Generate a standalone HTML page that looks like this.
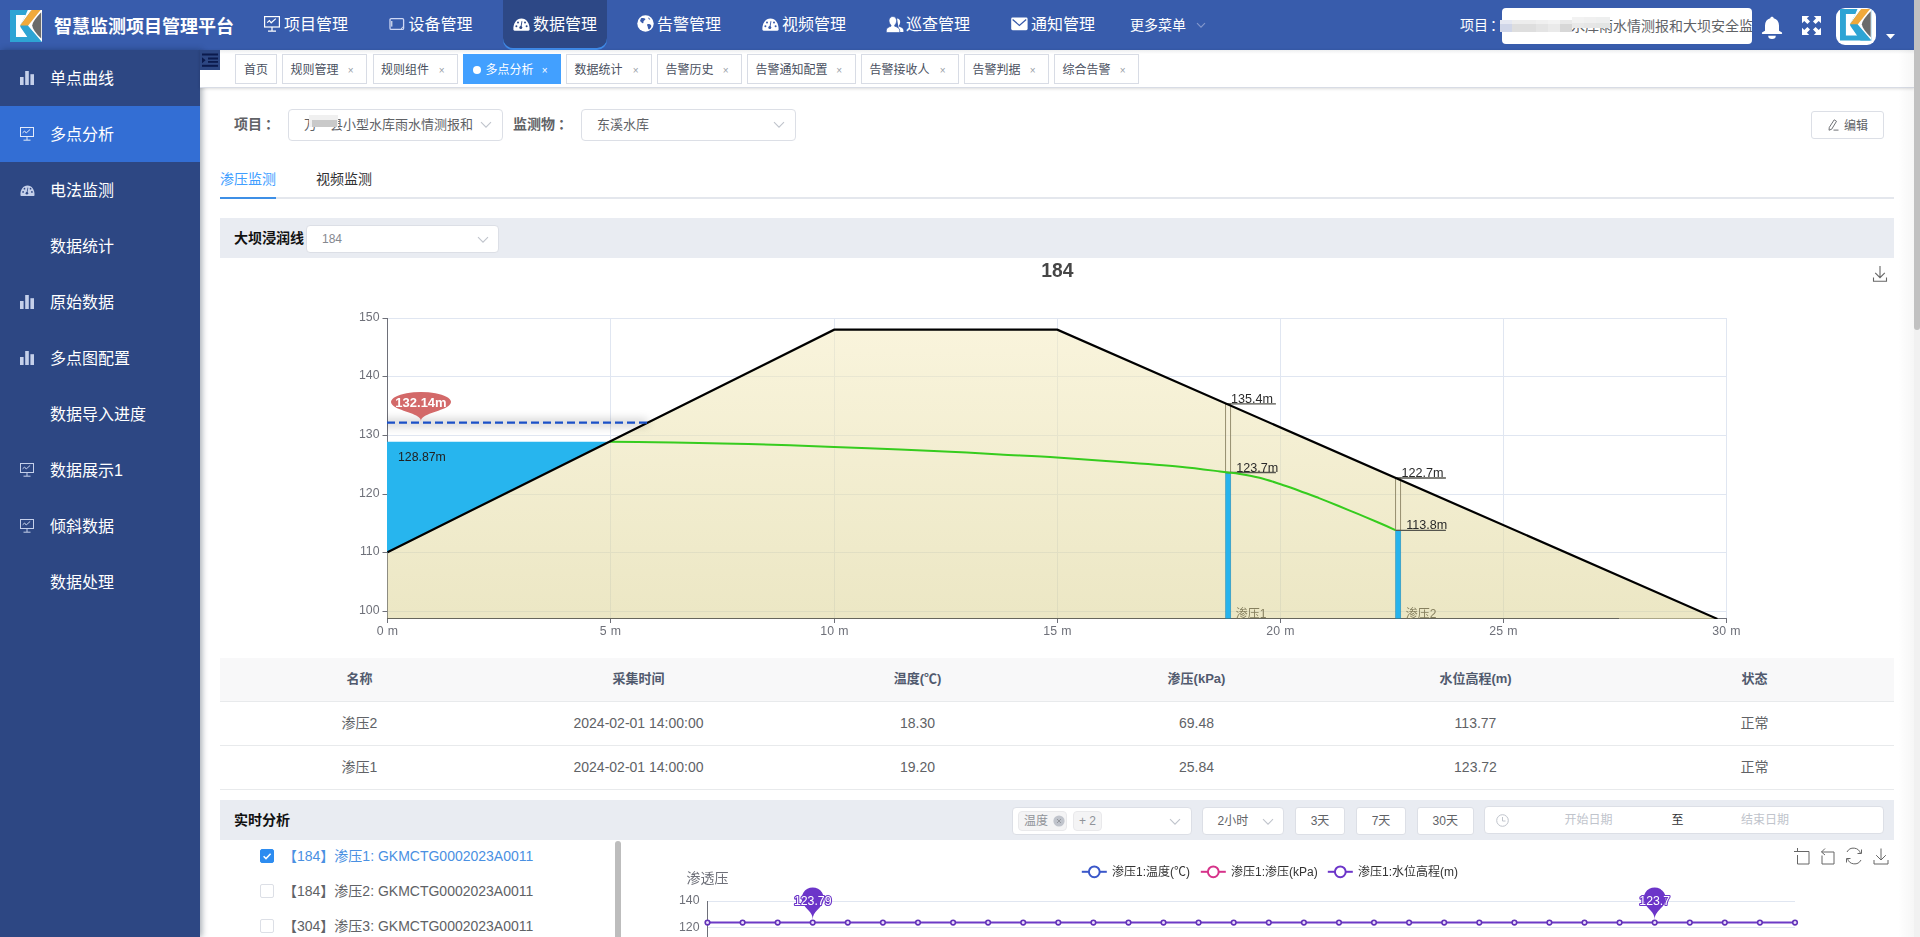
<!DOCTYPE html>
<html lang="zh-CN">
<head>
<meta charset="utf-8">
<title>智慧监测项目管理平台</title>
<style>
*{box-sizing:border-box;margin:0;padding:0}
html,body{width:1920px;height:937px;overflow:hidden;background:#fff}
body{font-family:"Liberation Sans","Noto Sans CJK SC",sans-serif;font-size:14px;color:#606266;position:relative}
.abs{position:absolute}
svg{display:block;overflow:visible}
/* header */
#hdr{position:absolute;left:0;top:0;width:1914px;height:50px;background:#385cac}
#logo{position:absolute;left:10px;top:10px;width:32px;height:32px}
#title{position:absolute;left:54px;top:1px;height:50px;line-height:52px;font-size:18px;font-weight:bold;color:#fff;white-space:nowrap}
.nav{position:absolute;top:0;height:48px;width:104px;color:#fff;font-size:16px;line-height:48px;white-space:nowrap}
.nav.on{background:#2d4886;border-radius:0 0 10px 10px;box-shadow:0 2px 0 0 #3f8ae8}
.nav svg{position:absolute;left:10px;top:16px}
.nav span{position:absolute;left:30px;top:1px}
#more{position:absolute;left:1130px;top:0;height:50px;line-height:50.5px;font-size:14px;color:#fff}
#pjl{position:absolute;left:1460px;top:0;line-height:50px;font-size:14px;color:#fff;white-space:nowrap}
#pjbox{position:absolute;left:1502px;top:8px;width:250px;height:36px;background:#fff;border-radius:4px;overflow:hidden;white-space:nowrap;font-size:14px;line-height:36px;color:#606266}
/* sidebar */
#side{position:absolute;left:0;top:50px;width:200px;height:887px;background:#2d4783;box-shadow:2px 0 6px rgba(0,21,41,.35)}
.mi{position:absolute;left:0;width:200px;height:56px;line-height:56px;color:#fff;font-size:16px}
.mi.on{background:#336ed4}
.mi span{position:absolute;left:50px;top:1px;white-space:nowrap}
.mi svg{position:absolute;left:20px;top:21px}
/* tags */
#tags{position:absolute;left:200px;top:50px;width:1714px;height:38px;background:#fff;border-bottom:1px solid #d8dce5;box-shadow:0 1px 3px 0 rgba(0,0,0,.12),0 0 3px 0 rgba(0,0,0,.04)}
.tag{position:absolute;top:4px;height:30px;border:1px solid #d8dce5;background:#fff;color:#495060;font-size:12px;line-height:28px;white-space:nowrap}
.tag span{position:absolute;left:7.5px;top:1px}
.tag i{position:absolute;right:12.5px;top:1.5px;font-style:normal;font-size:10px;color:#9a9fa8}
.tag.on{background:#42a0ff;border-color:#42a0ff;color:#fff}
.tag.on i{color:#fff}
.tag em{position:absolute;left:9px;top:11px;width:8px;height:8px;border-radius:50%;background:#fff}
/* form */
.lbl u{text-decoration:none;margin-left:3px}
.lbl{position:absolute;font-weight:bold;color:#606266;font-size:14px;white-space:nowrap}
.sel{position:absolute;border:1px solid #dcdfe6;border-radius:4px;background:#fff;color:#606266;white-space:nowrap;overflow:hidden}
.bar{position:absolute;left:220px;width:1674px;height:40px;background:#e9ecf2}
.bar b{position:absolute;left:14px;top:0;line-height:40px;color:#111;font-size:14px}
.btn{position:absolute;border:1px solid #dcdfe6;border-radius:3px;background:#fff;color:#606266;font-size:12px;text-align:center;white-space:nowrap}
/* table */
#tbl{position:absolute;left:220px;top:658px;width:1674px}
#tbl .r{display:flex;height:44px;border-bottom:1px solid #e8eaec;line-height:43px;text-align:center;font-size:14px;color:#606266}
#tbl .r.h{background:#f8f8f9;font-weight:bold;font-size:13px;color:#515a6e;line-height:42px}
#tbl .r div{flex:1}
.tr{position:absolute;left:287px;font-size:14px;color:#606266;white-space:nowrap;line-height:20px}
.cb{position:absolute;left:260px;width:14px;height:14px;border:1px solid #dcdfe6;border-radius:2px;background:#fff}
</style>
</head>
<body>
<div id="hdr">
  <svg id="logo" viewBox="0 0 32 32" width="32" height="32">
    <rect x="0" y="0" width="32" height="32" fill="#2ea4d4"/>
    <polygon points="6,5 15.8,5 10,15.7 17.8,27 6,27" fill="#fff"/>
    <polygon points="21,0 32,0 32,32 18,15.7" fill="#fff"/>
    <polygon points="15.6,5 17.8,0 21.6,0 10.4,15.4 9.9,15.7" fill="#fff"/><polygon points="21.6,0 30.6,0 18.2,15.4 10.1,15.4" fill="#f0a93b"/>
    <polygon points="10.1,16.4 18.2,16.4 30.6,31.4 30.6,32 20.8,32" fill="#2ea4d4"/>
    <path d="M31.2,2.2 L31.2,28.6 Q22.6,20 22.2,15.4 Q22.6,11 31.2,2.2 Z" fill="#6b6b6b"/>
  </svg>
  <div id="title">智慧监测项目管理平台</div>

  <div class="nav" style="left:254px">
    <svg width="16" height="16" viewBox="0 0 16 16" fill="none" stroke="#fff" stroke-width="1.2"><rect x=".6" y=".6" width="14.8" height="10.4"/><path d="M8 11v4M4 15.2h8M3.2 6.6l2.2-2 1.8 2.2 4.6-4.2" /></svg>
    <span>项目管理</span></div>
  <div class="nav" style="left:378.5px">
    <svg width="16" height="16" viewBox="0 0 16 16" fill="none" stroke="#cfd8f5" stroke-width="1.3"><rect x="1" y="2.6" width="13.6" height="10.8" rx="1.2"/><path d="M2.8 5v5.6" stroke="#fff" stroke-width="1"/><path d="M12.2 12.6l1.6-1.6" stroke="#fff" stroke-width="1"/></svg>
    <span>设备管理</span></div>
  <div class="nav on" style="left:503px">
    <svg width="17" height="16" viewBox="0 0 17 16"><path d="M.4 13.6C.1 7.4 3.6 2.6 8.5 2.6s8.4 4.8 8.1 11c0 .7-.5 1.2-1.2 1.2H1.6c-.7 0-1.2-.5-1.2-1.2z" fill="#fff"/><g fill="#2d4886"><circle cx="3.4" cy="10.2" r="1"/><circle cx="5" cy="6.4" r="1"/><circle cx="12" cy="6.4" r="1"/><circle cx="13.6" cy="10.2" r="1"/><circle cx="7.8" cy="11.6" r="1.5"/><path d="M7.4 11l1.2-6 .8.2-1 6z"/></g></svg>
    <span>数据管理</span></div>
  <div class="nav" style="left:627px">
    <svg width="17" height="17" viewBox="0 0 17 17" style="top:15px"><circle cx="8.5" cy="8.5" r="8.2" fill="#fff"/><path d="M4 3.2c1.6-.4 3.4-.4 4.2.6.8 1-1 1.4-1.600 2.400-.6 1 .4 1.800-.600 2-1 .2-1.600-1-3-2.200M10.400 9.200c1.400-.6 3.200 0 3.800 1.200.5 1-.8 2.800-1.800 3.800-.8.800-1.600-1-1.600-2.200 0-1.200-1.400-2.200-.4-2.800zM11 2.600c1 .2 1.800 1 2.400 1.800l-1.400.2z" fill="#395bab"/></svg>
    <span>告警管理</span></div>
  <div class="nav" style="left:752px">
    <svg width="17" height="16" viewBox="0 0 17 16"><path d="M.4 13.6C.1 7.4 3.6 2.6 8.500 2.600s8.400 4.800 8.100 11c0 .7-.5 1.200-1.200 1.200H1.600c-.7 0-1.200-.5-1.200-1.200z" fill="#fff"/><g fill="#395bab"><circle cx="3.4" cy="10.2" r="1"/><circle cx="5" cy="6.4" r="1"/><circle cx="12" cy="6.4" r="1"/><circle cx="13.6" cy="10.2" r="1"/><circle cx="7.8" cy="11.6" r="1.5"/><path d="M7.4 11l1.2-6 .8.2-1 6z"/></g></svg>
    <span>视频管理</span></div>
  <div class="nav" style="left:876px">
    <svg width="18" height="17" viewBox="0 0 18 17" style="top:15.500px;left:9.500px"><path d="M11 2.600c2 0 3.200 1.500 3.200 3.500 0 1.500-.7 2.800-1.500 3.600v.9c1.700.7 4.700 1.700 4.700 3.600v1.800h-4.200" fill="#fff"/><path d="M6.800.5c2.300 0 3.800 1.900 3.800 4.200 0 1.800-.8 3.500-1.900 4.400v1.100c2.100.7 5 1.800 5 3.900v2.500H.3v-2.500c0-2.100 2.600-3.200 4.700-3.900V9.100C3.900 8.200 3 6.500 3 4.700 3 2.400 4.500.5 6.800.5z" fill="#fff" stroke="#385cac" stroke-width=".7"/></svg>
    <span>巡查管理</span></div>
  <div class="nav" style="left:1001px">
    <svg width="17" height="14" viewBox="0 0 17 14" style="top:17px"><rect x=".2" y=".6" width="16.4" height="12.6" rx="1.4" fill="#fff"/><path d="M1.600 2.600l6.800 5.800 6.800-5.800" fill="none" stroke="#395bab" stroke-width="1.3"/></svg>
    <span>通知管理</span></div>
  <div id="more">更多菜单</div>
  <svg class="abs" style="left:1196px;top:21.700px" width="10" height="7" viewBox="0 0 10 7"><path d="M1 1.200l4 4 4-4" fill="none" stroke="#8498cd" stroke-width="1.1"/></svg>

  <div id="pjl">项目<span style="margin-left:2px">：</span></div>
  <div id="pjbox"><span style="position:absolute;left:-1px;top:0">万　县小型水库雨水情测报和大坝安全监</span></div>
  <div class="abs" style="left:1502px;top:14px;width:70px;height:24px;background:#fff"></div>
  <div class="abs" style="left:1500px;top:20px;width:72px;height:12px;background:linear-gradient(90deg,#d0d6e8 0,#d0d6e8 12px,#dedede 12px,#dedede 36px,#e4e4e4 36px,#e4e4e4 48px,#eaeaea 48px,#eaeaea 60px,#d7d7d7 60px,#d7d7d7 72px)"></div>
  <div class="abs" style="left:1500px;top:20px;width:72px;height:4px;background:rgba(255,255,255,.45)"></div>
  <div class="abs" style="left:1572px;top:17px;width:38px;height:10.500px;background:linear-gradient(90deg,#e9e9e9 0,#e9e9e9 12px,#e6e6e6 12px,#e6e6e6 24px,#e3e5e4 24px,#e3e5e4 38px)"></div>
  <div class="abs" style="left:1572px;top:17px;width:38px;height:6px;background:rgba(255,255,255,.4)"></div>
  <svg class="abs" style="left:1761px;top:16px" width="22" height="24" viewBox="0 0 22 24"><path d="M11 .8c.9 0 1.600.6 1.700 1.400 3.400.8 5.300 3.600 5.300 7.200v5.400l2.600 1.400c.3.200.5.500.5.800v.400c0 .3-.2.500-.5.500H1.400c-.3 0-.5-.2-.5-.5V17c0-.3.200-.6.500-.8L4 14.800V9.400C4 5.800 5.900 3 9.300 2.200 9.400 1.400 10.100.8 11 .8z" fill="#fff"/><path d="M7.200 19.800h7.600a3.800 3.300 0 0 1-7.600 0z" fill="#fff"/></svg>
  <svg class="abs" style="left:1801.500px;top:15.800px" width="19" height="19" viewBox="0 0 19 19" fill="#fff"><path d="M0 0h7.200L4.900 2.300l3.100 3.100-2.600 2.600-3.100-3.100L0 7.200zM19 0v7.200l-2.300-2.300-3.100 3.100-2.600-2.600 3.100-3.100L11.800 0zM0 19v-7.200l2.300 2.300 3.100-3.100 2.600 2.600-3.100 3.100L7.200 19zM19 19h-7.200l2.300-2.300-3.100-3.100 2.600-2.600 3.100 3.100 2.300-2.300z"/></svg>
  <div class="abs" style="left:1836px;top:8px;width:40px;height:37px;background:#fff;border-radius:9px"></div>
  <svg class="abs" style="left:1840px;top:8.500px" viewBox="0 0 32 32" width="31.500" height="31.500">
    <rect x="0" y="0" width="32" height="32" fill="#2ea4d4"/>
    <polygon points="6,5 15.800,5 10,15.700 17.800,27 6,27" fill="#fff"/>
    <polygon points="21,0 32,0 32,32 18,15.700" fill="#fff"/>
    <polygon points="15.6,5 17.8,0 21.6,0 10.4,15.4 9.9,15.7" fill="#fff"/><polygon points="21.600,0 30.600,0 18.200,15.400 10.100,15.400" fill="#f0a93b"/>
    <polygon points="10.100,16.400 18.200,16.400 30.600,31.400 30.600,32 20.800,32" fill="#2ea4d4"/>
    <path d="M31.200,2.200 L31.200,28.600 Q22.600,20 22.200,15.400 Q22.600,11 31.200,2.200 Z" fill="#6b6b6b"/>
  </svg>
  <svg class="abs" style="left:1885.500px;top:34px" width="9" height="5" viewBox="0 0 9 5"><path d="M0 0h9L4.500 5z" fill="#fff"/></svg>
</div>

<div id="side">
  <div class="mi" style="top:0"><svg width="14" height="14" viewBox="0 0 14 14" fill="#c5d0ea"><rect x="0" y="6" width="3.600" height="8"/><rect x="5.200" y="0" width="3.600" height="14"/><rect x="10.400" y="3.200" width="3.600" height="10.800"/></svg><span>单点曲线</span></div>
  <div class="mi on" style="top:56px"><svg width="14" height="14" viewBox="0 0 14 14" fill="none" stroke="#e3ebfa" stroke-width="1"><rect x=".5" y=".5" width="13" height="9"/><path d="M7 9.500v3.500M3.500 13.200h7M2.600 5.800l2-1.800 1.600 2 4-3.600"/></svg><span>多点分析</span></div>
  <div class="mi" style="top:112px"><svg width="15" height="13" viewBox="0 0 17 15" style="top:22px"><path d="M.4 12.600C.1 6.400 3.600 1.600 8.500 1.600s8.400 4.800 8.100 11c0 .7-.5 1.200-1.200 1.200H1.600c-.7 0-1.200-.5-1.200-1.200z" fill="#c5d0ea"/><g fill="#2e4885"><circle cx="3.400" cy="9.200" r="1"/><circle cx="5" cy="5.400" r="1"/><circle cx="12" cy="5.400" r="1"/><circle cx="13.600" cy="9.200" r="1"/><circle cx="7.800" cy="10.600" r="1.500"/><path d="M7.400 10l1.200-6 .8.200-1 6z"/></g></svg><span>电法监测</span></div>
  <div class="mi" style="top:168px"><span>数据统计</span></div>
  <div class="mi" style="top:224px"><svg width="14" height="14" viewBox="0 0 14 14" fill="#c5d0ea"><rect x="0" y="6" width="3.600" height="8"/><rect x="5.200" y="0" width="3.600" height="14"/><rect x="10.400" y="3.200" width="3.600" height="10.800"/></svg><span>原始数据</span></div>
  <div class="mi" style="top:280px"><svg width="14" height="14" viewBox="0 0 14 14" fill="#c5d0ea"><rect x="0" y="6" width="3.600" height="8"/><rect x="5.200" y="0" width="3.600" height="14"/><rect x="10.400" y="3.200" width="3.600" height="10.800"/></svg><span>多点图配置</span></div>
  <div class="mi" style="top:336px"><span>数据导入进度</span></div>
  <div class="mi" style="top:392px"><svg width="14" height="14" viewBox="0 0 14 14" fill="none" stroke="#c5d0ea" stroke-width="1"><rect x=".5" y=".5" width="13" height="9"/><path d="M7 9.500v3.500M3.500 13.200h7M2.600 5.800l2-1.800 1.600 2 4-3.600"/></svg><span>数据展示1</span></div>
  <div class="mi" style="top:448px"><svg width="14" height="14" viewBox="0 0 14 14" fill="none" stroke="#c5d0ea" stroke-width="1"><rect x=".5" y=".5" width="13" height="9"/><path d="M7 9.500v3.500M3.500 13.200h7M2.600 5.800l2-1.800 1.600 2 4-3.600"/></svg><span>倾斜数据</span></div>
  <div class="mi" style="top:504px"><span>数据处理</span></div>
</div>

<div id="tags">
  <div class="abs hshadow" style="left:20px;top:0;width:1694px;height:4px;background:linear-gradient(180deg,rgba(0,21,41,.07),rgba(0,21,41,0))"></div>
  <div class="tag" style="left:35px;width:42px"><span style="left:8px">首页</span></div>
  <div class="tag" style="left:82px;width:85px"><span>规则管理</span><i>×</i></div>
  <div class="tag" style="left:172.500px;width:85.500px"><span>规则组件</span><i>×</i></div>
  <div class="tag on" style="left:263px;width:98px"><em></em><span style="left:21.5px">多点分析</span><i>×</i></div>
  <div class="tag" style="left:366px;width:86px"><span>数据统计</span><i>×</i></div>
  <div class="tag" style="left:457px;width:85px"><span>告警历史</span><i>×</i></div>
  <div class="tag" style="left:547px;width:108.500px"><span>告警通知配置</span><i>×</i></div>
  <div class="tag" style="left:661px;width:98px"><span>告警接收人</span><i>×</i></div>
  <div class="tag" style="left:764px;width:85px"><span>告警判据</span><i>×</i></div>
  <div class="tag" style="left:854px;width:85px"><span>综合告警</span><i>×</i></div>
</div>
<div class="abs" style="left:200px;top:50px;width:20px;height:20px;background:#2d4783">
  <svg width="20" height="20" viewBox="0 0 20 20" fill="#0b1a4d"><rect x="2" y="3.500" width="16" height="2"/><rect x="8" y="7.500" width="10" height="2"/><rect x="8" y="11" width="10" height="1.800"/><rect x="2" y="14.800" width="16" height="2"/><path d="M2 7.200l3.600 3-3.600 3z"/></svg>
</div>

<div class="lbl" style="left:234px;top:114px;line-height:20px">项目<u>：</u></div>
<div class="sel" style="left:288px;top:109px;width:215px;height:32px;font-size:13px;line-height:30px">
  <span style="position:absolute;left:15px;top:-.5px">万　县小型水库雨水情测报和</span>
  <div class="abs" style="left:20px;top:5.200px;width:29px;height:12px;background:#f0f0f0"></div><div class="abs" style="left:23px;top:10px;width:24.500px;height:7px;background:#c9c9c9"></div>
  <svg class="abs" style="left:191px;top:11px" width="12" height="8" viewBox="0 0 12 8"><path d="M1 1.200l5 5 5-5" fill="none" stroke="#c0c4cc" stroke-width="1.100"/></svg>
</div>
<div class="lbl" style="left:513px;top:114px;line-height:20px">监测物<u>：</u></div>
<div class="sel" style="left:581px;top:109px;width:215px;height:32px;font-size:13px;line-height:30px">
  <span style="position:absolute;left:15px;top:-.5px">东溪水库</span>
  <svg class="abs" style="left:191px;top:11px" width="12" height="8" viewBox="0 0 12 8"><path d="M1 1.200l5 5 5-5" fill="none" stroke="#c0c4cc" stroke-width="1.100"/></svg>
</div>
<div class="btn" style="left:1811px;top:111px;width:73px;height:28px;line-height:26px">
  <svg class="abs" style="left:16px;top:6.500px" width="12" height="12" viewBox="0 0 12 12" fill="none" stroke="#606266" stroke-width=".9"><path d="M6.200 .8l2.300 1.500-4.800 7.900-2.700 1 .3-2.800zM5.500 11.100h5"/></svg>
  <span style="position:absolute;left:32px;top:.8px">编辑</span>
</div>
<!-- tabs -->
<div class="abs" style="left:220px;top:197px;width:1674px;height:2px;background:#e4e7ed"></div>
<div class="abs" style="left:220px;top:197px;width:56px;height:2px;background:#3d8fe6"></div>
<div class="abs" style="left:220px;top:169px;font-size:14px;line-height:20px;color:#409eff;white-space:nowrap">渗压监测</div>
<div class="abs" style="left:316px;top:169px;font-size:14px;line-height:20px;color:#303133;white-space:nowrap">视频监测</div>
<!-- section bar -->
<div class="bar" style="top:218px"><b>大坝浸润线</b>
  <div class="sel" style="left:86px;top:7px;width:193px;height:28px;font-size:12px;line-height:26px;color:#85888f"><span style="position:absolute;left:15px;top:0">184</span>
  <svg class="abs" style="left:169.500px;top:10px" width="12" height="8" viewBox="0 0 12 8"><path d="M1 1.200l5 5 5-5" fill="none" stroke="#c0c4cc" stroke-width="1.100"/></svg></div>
</div>

<div id="tbl">
  <div class="r h"><div>名称</div><div>采集时间</div><div>温度(℃)</div><div>渗压(kPa)</div><div>水位高程(m)</div><div>状态</div></div>
  <div class="r"><div>渗压2</div><div>2024-02-01 14:00:00</div><div>18.30</div><div>69.48</div><div>113.77</div><div>正常</div></div>
  <div class="r"><div>渗压1</div><div>2024-02-01 14:00:00</div><div>19.20</div><div>25.84</div><div>123.72</div><div>正常</div></div>
</div>

<div class="bar" style="top:800px"><b>实时分析</b></div>
<div class="sel" style="left:1012px;top:806.500px;width:180px;height:28px"><div class="abs" style="left:5px;top:3.500px;width:49px;height:20px;background:#f4f4f5;border:1px solid #e9e9eb;border-radius:4px;font-size:12px;line-height:18px;color:#909399"><span style="position:absolute;left:5px;top:-.5px">温度</span><svg class="abs" style="left:33.500px;top:3px" width="12" height="12" viewBox="0 0 12 12"><circle cx="6" cy="6" r="5.600" fill="#c0c4cc"/><path d="M4 4l4 4M8 4l-4 4" stroke="#909399" stroke-width=".9"/></svg></div><div class="abs" style="left:60px;top:3.500px;width:29px;height:20px;background:#f4f4f5;border:1px solid #e9e9eb;border-radius:4px;font-size:12px;line-height:18px;color:#909399;text-align:center">+ 2</div><svg class="abs" style="left:156px;top:10.500px" width="12" height="8" viewBox="0 0 12 8"><path d="M1 1.200l5 5 5-5" fill="none" stroke="#c0c4cc" stroke-width="1.100"/></svg></div>
<div class="sel" style="left:1202px;top:806.500px;width:82px;height:28px;font-size:12px;line-height:26px"><span style="position:absolute;left:14.500px;top:0">2小时</span><svg class="abs" style="left:59px;top:10.500px" width="12" height="8" viewBox="0 0 12 8"><path d="M1 1.200l5 5 5-5" fill="none" stroke="#c0c4cc" stroke-width="1.100"/></svg></div>
<div class="btn" style="left:1295.0px;top:806.500px;width:50.0px;height:28px;line-height:26px">3天</div>
<div class="btn" style="left:1356.0px;top:806.500px;width:50.0px;height:28px;line-height:26px">7天</div>
<div class="btn" style="left:1417.0px;top:806.500px;width:56.5px;height:28px;line-height:26px">30天</div>
<div class="sel" style="left:1484px;top:806px;width:399.500px;height:27.500px;font-size:12px;line-height:27.500px"><svg class="abs" style="left:11px;top:6.500px" width="13" height="13" viewBox="0 0 13 13" fill="none" stroke="#c0c4cc" stroke-width="1"><circle cx="6.500" cy="6.500" r="5.800"/><path d="M6.500 3v4h3"/></svg><span style="position:absolute;left:79.500px;top:0;color:#c0c4cc">开始日期</span><span style="position:absolute;left:186.500px;top:0;color:#303133">至</span><span style="position:absolute;left:256px;top:0;color:#c0c4cc">结束日期</span></div>
<div class="cb" style="top:849px;background:#2d8cf0;border-color:#2d8cf0"><svg width="12" height="12" viewBox="0 0 12 12" style="position:absolute;left:0;top:0"><path d="M2.600 6.200l2.400 2.400 4.600-4.800" fill="none" stroke="#fff" stroke-width="1.500"/></svg></div>
<div class="tr" style="left:283px;top:846px;color:#4a90e2">【184】渗压1: GKMCTG0002023A0011</div>
<div class="cb" style="top:884px"></div>
<div class="tr" style="left:283px;top:881px;">【184】渗压2: GKMCTG0002023A0011</div>
<div class="cb" style="top:919px"></div>
<div class="tr" style="left:283px;top:916px;">【304】渗压3: GKMCTG0002023A0011</div>
<div class="abs" style="left:615px;top:841px;width:6px;height:110px;border-radius:3px;background:#bdbdbd"></div>

<div class="abs" style="left:1898px;top:50px;width:16px;height:887px;background:linear-gradient(90deg,rgba(0,0,0,0),rgba(0,0,0,.035))"></div>
<div class="abs" style="left:1914px;top:0;width:6px;height:937px;background:#f1f1f1"></div>
<div class="abs" style="left:1914px;top:0;width:6px;height:330px;border-radius:0 0 3px 3px;background:#c1c1c1"></div>

<svg class="abs" style="left:0;top:0;will-change:transform" width="1920" height="937" viewBox="0 0 1920 937" font-family="Liberation Sans, Noto Sans CJK SC, sans-serif">
<defs><linearGradient id="dam" gradientUnits="userSpaceOnUse" x1="0" y1="329" x2="0" y2="619"><stop offset="0" stop-color="#f4ebbf"/><stop offset="1" stop-color="#dcd394"/></linearGradient><filter id="sh" filterUnits="userSpaceOnUse" x="340" y="390" width="360" height="70"><feGaussianBlur stdDeviation="5"/></filter><clipPath id="cp"><rect x="387" y="300" width="1340" height="319"/></clipPath></defs>
<text x="1057.4" y="277" text-anchor="middle" font-size="19.3" font-weight="bold" fill="#464646">184</text>
<g fill="none" stroke="#666" stroke-width="1.1"><path d="M1880 266v11.5M1875.2 272.8l4.800 4.800 4.800-4.800M1873.500 277.500v3.800h13v-3.800"/></g>
<path d="M387.5 611.5H1727.0" stroke="#e0e6f1" stroke-width="1"/>
<path d="M387.5 552.5H1727.0" stroke="#e0e6f1" stroke-width="1"/>
<path d="M387.5 494.5H1727.0" stroke="#e0e6f1" stroke-width="1"/>
<path d="M387.5 435.5H1727.0" stroke="#e0e6f1" stroke-width="1"/>
<path d="M387.5 376.5H1727.0" stroke="#e0e6f1" stroke-width="1"/>
<path d="M387.5 318.5H1727.0" stroke="#e0e6f1" stroke-width="1"/>
<path d="M610.5 318.0V618.5" stroke="#e0e6f1" stroke-width="1"/>
<path d="M834.5 318.0V618.5" stroke="#e0e6f1" stroke-width="1"/>
<path d="M1057.5 318.0V618.5" stroke="#e0e6f1" stroke-width="1"/>
<path d="M1280.5 318.0V618.5" stroke="#e0e6f1" stroke-width="1"/>
<path d="M1503.5 318.0V618.5" stroke="#e0e6f1" stroke-width="1"/>
<path d="M1726.5 318.0V618.5" stroke="#e0e6f1" stroke-width="1"/>
<path d="M387.5 318V619.0" stroke="#6e7079" stroke-width="1"/>
<path d="M387.0 618.5H1727" stroke="#6e7079" stroke-width="1"/>
<path d="M382.500 611.5H387.500" stroke="#6e7079" stroke-width="1"/>
<text x="379.500" y="614.2" text-anchor="end" font-size="12.3" fill="#6e7079">100</text>
<path d="M382.500 552.5H387.500" stroke="#6e7079" stroke-width="1"/>
<text x="379.500" y="555.2" text-anchor="end" font-size="12.3" fill="#6e7079">110</text>
<path d="M382.500 494.5H387.500" stroke="#6e7079" stroke-width="1"/>
<text x="379.500" y="497.2" text-anchor="end" font-size="12.3" fill="#6e7079">120</text>
<path d="M382.500 435.5H387.500" stroke="#6e7079" stroke-width="1"/>
<text x="379.500" y="438.2" text-anchor="end" font-size="12.3" fill="#6e7079">130</text>
<path d="M382.500 376.5H387.500" stroke="#6e7079" stroke-width="1"/>
<text x="379.500" y="379.2" text-anchor="end" font-size="12.3" fill="#6e7079">140</text>
<path d="M382.500 318.5H387.500" stroke="#6e7079" stroke-width="1"/>
<text x="379.500" y="321.2" text-anchor="end" font-size="12.3" fill="#6e7079">150</text>
<path d="M387.5 618.5V623.0" stroke="#6e7079" stroke-width="1"/>
<text x="387.5" y="635.300" text-anchor="middle" font-size="12.3" letter-spacing=".3" fill="#6e7079">0 m</text>
<path d="M610.5 618.5V623.0" stroke="#6e7079" stroke-width="1"/>
<text x="610.5" y="635.300" text-anchor="middle" font-size="12.3" letter-spacing=".3" fill="#6e7079">5 m</text>
<path d="M834.5 618.5V623.0" stroke="#6e7079" stroke-width="1"/>
<text x="834.5" y="635.300" text-anchor="middle" font-size="12.3" letter-spacing=".3" fill="#6e7079">10 m</text>
<path d="M1057.5 618.5V623.0" stroke="#6e7079" stroke-width="1"/>
<text x="1057.5" y="635.300" text-anchor="middle" font-size="12.3" letter-spacing=".3" fill="#6e7079">15 m</text>
<path d="M1280.5 618.5V623.0" stroke="#6e7079" stroke-width="1"/>
<text x="1280.5" y="635.300" text-anchor="middle" font-size="12.3" letter-spacing=".3" fill="#6e7079">20 m</text>
<path d="M1503.5 618.5V623.0" stroke="#6e7079" stroke-width="1"/>
<text x="1503.5" y="635.300" text-anchor="middle" font-size="12.3" letter-spacing=".3" fill="#6e7079">25 m</text>
<path d="M1726.5 618.5V623.0" stroke="#6e7079" stroke-width="1"/>
<text x="1726.5" y="635.300" text-anchor="middle" font-size="12.3" letter-spacing=".3" fill="#6e7079">30 m</text>
<polygon points="387.5,619 387.5,552.2 834.2,329.7 1057.3,329.7 1717.4,618.9" fill="url(#dam)" fill-opacity=".55"/>
<path d="M387 618.5H1619" stroke="#66665c" stroke-width="1"/>
<polygon points="387,441.8 609.1,441.8 387,552.4" fill="#27b5ee"/>
<text x="398" y="461" font-size="12.3" fill="#222">128.87m</text>
<rect x="1225.6" y="403.8" width="5" height="68.7" fill="rgba(255,255,255,.12)" stroke="#8c8464" stroke-width=".9"/>
<rect x="1225.4" y="472.5" width="5.400" height="146.0" fill="#27b3ec" stroke="rgba(20,70,100,.45)" stroke-width=".5"/>
<path d="M1225.4 403.8h50.500" stroke="#55554e" stroke-width="1.300"/>
<path d="M1225.4 472.5h50.500" stroke="#55554e" stroke-width="1.300"/>
<text x="1231.1" y="402.8" font-size="12.600" fill="#2a2a2a">135.4m</text>
<text x="1236.2" y="471.5" font-size="12.600" fill="#2a2a2a">123.7m</text>
<text x="1235.7" y="617.5" font-size="12" fill="#857f5e">渗压1</text>
<rect x="1395.6" y="478.0" width="5" height="52.3" fill="rgba(255,255,255,.12)" stroke="#8c8464" stroke-width=".9"/>
<rect x="1395.4" y="530.3" width="5.400" height="88.2" fill="#27b3ec" stroke="rgba(20,70,100,.45)" stroke-width=".5"/>
<path d="M1395.4 478.0h50.500" stroke="#55554e" stroke-width="1.300"/>
<path d="M1395.4 530.3h50.500" stroke="#55554e" stroke-width="1.300"/>
<text x="1401.6" y="477.0" font-size="12.600" fill="#2a2a2a">122.7m</text>
<text x="1406.2" y="529.3" font-size="12.600" fill="#2a2a2a">113.8m</text>
<text x="1405.7" y="617.5" font-size="12" fill="#857f5e">渗压2</text>
<path d="M609.3 441.8 C616.9 441.9 640.0 442.0 655.0 442.2 C670.0 442.4 683.4 442.6 699.0 442.9 C714.6 443.2 733.2 443.7 748.4 444.1 C763.6 444.5 775.7 444.8 790.0 445.3 C804.3 445.8 815.7 446.3 834.0 447.0 C852.3 447.7 880.7 448.6 900.0 449.4 C919.3 450.2 933.3 450.9 950.0 451.7 C966.7 452.5 982.2 453.4 1000.0 454.4 C1017.8 455.4 1037.0 456.2 1057.0 457.5 C1077.0 458.8 1099.5 460.4 1120.0 461.9 C1140.5 463.4 1163.3 465.1 1180.0 466.7 C1196.7 468.3 1212.0 470.5 1220.0 471.5 C1228.0 472.5 1224.7 472.1 1228.0 472.5 C1231.3 472.9 1234.5 473.0 1239.8 473.9 C1245.1 474.8 1252.8 476.1 1259.6 477.8 C1266.4 479.5 1274.1 482.1 1280.7 484.2 C1287.3 486.3 1292.8 488.4 1299.2 490.7 C1305.6 493.0 1312.4 495.6 1319.0 498.1 C1325.6 500.7 1332.1 503.3 1338.7 506.0 C1345.3 508.7 1351.9 511.5 1358.5 514.2 C1365.1 517.0 1372.1 519.9 1378.3 522.5 C1384.5 525.1 1392.6 528.8 1395.4 530.1" fill="none" stroke="#36cc1e" stroke-width="2"/>
<g clip-path="url(#cp)"><polyline points="387.5,552.2 834.2,329.7 1057.3,329.7 1717.4,618.9" fill="none" stroke="#000" stroke-width="2.2" stroke-linejoin="miter"/></g>
<g clip-path="url(#cp)"><path d="M379.5 422.7H647.5" stroke="rgba(0,0,0,.3)" stroke-width="4.4" filter="url(#sh)"/></g>
<path d="M387.0 422.7H647.5" stroke="#1a50c8" stroke-width="2.2" stroke-dasharray="8 4"/>
<path d="M393.89 406.21 A30.00 9.95 0 1 1 448.11 406.21 C440.39 411.61 421.00 413.94 421.00 420.90 C421.00 413.94 401.61 411.61 393.89 406.21Z" fill="#d36969"/>
<text x="421" y="407.300" text-anchor="middle" font-size="13" font-weight="bold" fill="#fff">132.14m</text>
</svg>

<svg class="abs" style="left:0;top:0;will-change:transform" width="1920" height="937" viewBox="0 0 1920 937" font-family="Liberation Sans, Noto Sans CJK SC, sans-serif">
<text x="707.500" y="883" text-anchor="middle" font-size="14" fill="#6e7079">渗透压</text>
<path d="M707.500 901.5H1795" stroke="#e0e6f1" stroke-width="1"/>
<text x="699.500" y="903.8" text-anchor="end" font-size="12.3" fill="#6e7079">140</text>
<path d="M707.500 927.5H1795" stroke="#e0e6f1" stroke-width="1"/>
<text x="699.500" y="930.6" text-anchor="end" font-size="12.3" fill="#6e7079">120</text>
<path d="M707.500 901V937" stroke="#6e7079" stroke-width="1"/>
<path d="M1081.8 871.800h25" stroke="#3a57c9" stroke-width="2"/>
<circle cx="1094.3" cy="871.800" r="5.400" fill="#fff" stroke="#3a57c9" stroke-width="2"/>
<text x="1112.0" y="875.600" font-size="12" fill="#333">渗压1:温度(℃)</text>
<path d="M1200.8 871.800h25" stroke="#d6338a" stroke-width="2"/>
<circle cx="1213.3" cy="871.800" r="5.400" fill="#fff" stroke="#d6338a" stroke-width="2"/>
<text x="1231.0" y="875.600" font-size="12" fill="#333">渗压1:渗压(kPa)</text>
<path d="M1327.8 871.800h25" stroke="#6c35c9" stroke-width="2"/>
<circle cx="1340.3" cy="871.800" r="5.400" fill="#fff" stroke="#6c35c9" stroke-width="2"/>
<text x="1358.0" y="875.600" font-size="12" fill="#333">渗压1:水位高程(m)</text>
<path d="M707.500 922.600H1795" stroke="#6d3ac6" stroke-width="2"/>
<circle cx="707.5" cy="922.600" r="2.300" fill="#e9defa" stroke="#6232b8" stroke-width="1.600"/>
<circle cx="742.6" cy="922.600" r="2.300" fill="#e9defa" stroke="#6232b8" stroke-width="1.600"/>
<circle cx="777.7" cy="922.600" r="2.300" fill="#e9defa" stroke="#6232b8" stroke-width="1.600"/>
<circle cx="812.7" cy="922.600" r="2.300" fill="#e9defa" stroke="#6232b8" stroke-width="1.600"/>
<circle cx="847.8" cy="922.600" r="2.300" fill="#e9defa" stroke="#6232b8" stroke-width="1.600"/>
<circle cx="882.9" cy="922.600" r="2.300" fill="#e9defa" stroke="#6232b8" stroke-width="1.600"/>
<circle cx="918.0" cy="922.600" r="2.300" fill="#e9defa" stroke="#6232b8" stroke-width="1.600"/>
<circle cx="953.1" cy="922.600" r="2.300" fill="#e9defa" stroke="#6232b8" stroke-width="1.600"/>
<circle cx="988.1" cy="922.600" r="2.300" fill="#e9defa" stroke="#6232b8" stroke-width="1.600"/>
<circle cx="1023.2" cy="922.600" r="2.300" fill="#e9defa" stroke="#6232b8" stroke-width="1.600"/>
<circle cx="1058.3" cy="922.600" r="2.300" fill="#e9defa" stroke="#6232b8" stroke-width="1.600"/>
<circle cx="1093.4" cy="922.600" r="2.300" fill="#e9defa" stroke="#6232b8" stroke-width="1.600"/>
<circle cx="1128.5" cy="922.600" r="2.300" fill="#e9defa" stroke="#6232b8" stroke-width="1.600"/>
<circle cx="1163.5" cy="922.600" r="2.300" fill="#e9defa" stroke="#6232b8" stroke-width="1.600"/>
<circle cx="1198.6" cy="922.600" r="2.300" fill="#e9defa" stroke="#6232b8" stroke-width="1.600"/>
<circle cx="1233.7" cy="922.600" r="2.300" fill="#e9defa" stroke="#6232b8" stroke-width="1.600"/>
<circle cx="1268.8" cy="922.600" r="2.300" fill="#e9defa" stroke="#6232b8" stroke-width="1.600"/>
<circle cx="1303.9" cy="922.600" r="2.300" fill="#e9defa" stroke="#6232b8" stroke-width="1.600"/>
<circle cx="1339.0" cy="922.600" r="2.300" fill="#e9defa" stroke="#6232b8" stroke-width="1.600"/>
<circle cx="1374.0" cy="922.600" r="2.300" fill="#e9defa" stroke="#6232b8" stroke-width="1.600"/>
<circle cx="1409.1" cy="922.600" r="2.300" fill="#e9defa" stroke="#6232b8" stroke-width="1.600"/>
<circle cx="1444.2" cy="922.600" r="2.300" fill="#e9defa" stroke="#6232b8" stroke-width="1.600"/>
<circle cx="1479.3" cy="922.600" r="2.300" fill="#e9defa" stroke="#6232b8" stroke-width="1.600"/>
<circle cx="1514.4" cy="922.600" r="2.300" fill="#e9defa" stroke="#6232b8" stroke-width="1.600"/>
<circle cx="1549.4" cy="922.600" r="2.300" fill="#e9defa" stroke="#6232b8" stroke-width="1.600"/>
<circle cx="1584.5" cy="922.600" r="2.300" fill="#e9defa" stroke="#6232b8" stroke-width="1.600"/>
<circle cx="1619.6" cy="922.600" r="2.300" fill="#e9defa" stroke="#6232b8" stroke-width="1.600"/>
<circle cx="1654.7" cy="922.600" r="2.300" fill="#e9defa" stroke="#6232b8" stroke-width="1.600"/>
<circle cx="1689.8" cy="922.600" r="2.300" fill="#e9defa" stroke="#6232b8" stroke-width="1.600"/>
<circle cx="1724.8" cy="922.600" r="2.300" fill="#e9defa" stroke="#6232b8" stroke-width="1.600"/>
<circle cx="1759.9" cy="922.600" r="2.300" fill="#e9defa" stroke="#6232b8" stroke-width="1.600"/>
<circle cx="1795.0" cy="922.600" r="2.300" fill="#e9defa" stroke="#6232b8" stroke-width="1.600"/>
<path d="M802.82 903.19 A10.98 10.98 0 1 1 822.66 903.19 C819.84 909.14 812.74 911.71 812.74 919.40 C812.74 911.71 805.64 909.14 802.82 903.19Z" fill="#6c35c9"/>
<text x="812.7" y="905" text-anchor="middle" font-size="12.3" fill="#fff" stroke="#6c35c9" stroke-width="2.200" paint-order="stroke" stroke-linejoin="round">123.79</text>
<path d="M1644.76 903.19 A10.98 10.98 0 1 1 1664.60 903.19 C1661.77 909.14 1654.68 911.71 1654.68 919.40 C1654.68 911.71 1647.58 909.14 1644.76 903.19Z" fill="#6c35c9"/>
<text x="1654.7" y="905" text-anchor="middle" font-size="12.3" fill="#fff" stroke="#6c35c9" stroke-width="2.200" paint-order="stroke" stroke-linejoin="round">123.7</text>
<g fill="none" stroke="#666" stroke-width="1"><path d="M1797.500 848v4M1794 851.500h15v12.500h-11.500v-9"/><path d="M1825 848.500l-3.500 3.500 3.500 3M1821.500 852h12.500v12h-12v-8.500"/><path d="M1860.500 853.500a7.300 7.300 0 0 0-13.500-1.500M1847.500 858.500a7.300 7.300 0 0 0 13.500 1.500M1861.500 849.500v4h-4M1846.500 862.500v-4h4"/><path d="M1881 848.500v11.500M1876.200 855.200l4.800 4.800 4.800-4.800M1874 860v4h14v-4"/></g>
</svg>

</body>
</html>
